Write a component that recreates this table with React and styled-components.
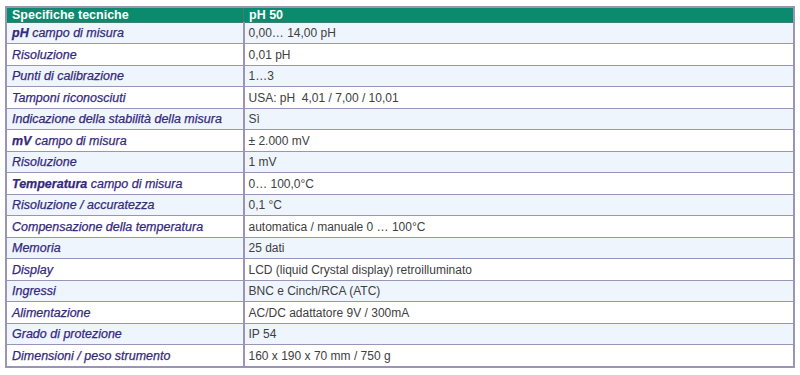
import styled, { createGlobalStyle } from 'styled-components';

const GlobalStyle = createGlobalStyle`
  html, body {
    margin: 0;
    padding: 0;
    background: #ffffff;
  }
`;

const Page = styled.div`
  padding: 6px 5px 0 5px;
  font-family: 'Liberation Sans', Arial, sans-serif;
`;

const Table = styled.table`
  width: 790px;
  height: 362px;
  border-collapse: collapse;
  table-layout: fixed;
  border: 2px solid #9a94b8;
  font-size: 12px;
`;

const HeadCell = styled.th`
  background: #0b8b6e;
  color: #ffffff;
  font-weight: bold;
  font-size: 12.5px;
  text-align: left;
  padding: 0 5px;
  border: 1px solid #3f7f6c;
  width: ${props => props.$width || 'auto'};
`;

const Row = styled.tr`
  background: ${props => (props.$alt ? '#eef5fd' : '#ffffff')};
`;

const LabelCell = styled.td`
  color: #35297a;
  font-style: italic;
  font-size: 12.5px;
  padding: 0 5px;
  border: 1px solid #9a94b8;
  white-space: nowrap;
  -webkit-text-stroke: 0.25px #35297a;

  strong {
    font-weight: bold;
  }
`;

const ValueCell = styled.td`
  color: #404040;
  padding: 0 4px;
  border: 1px solid #9a94b8;
  border-left: 2px solid #9a94b8;
  white-space: nowrap;
`;

const rows = [
  [<><strong>pH</strong> campo di misura</>, '0,00… 14,00 pH'],
  ['Risoluzione', '0,01 pH'],
  ['Punti di calibrazione', '1…3'],
  ['Tamponi riconosciuti', 'USA: pH\u00a0 4,01 / 7,00 / 10,01'],
  ['Indicazione della stabilità della misura', 'Sì'],
  [<><strong>mV</strong> campo di misura</>, '± 2.000 mV'],
  ['Risoluzione', '1 mV'],
  [<><strong>Temperatura</strong> campo di misura</>, '0… 100,0°C'],
  ['Risoluzione / accuratezza', '0,1 °C'],
  ['Compensazione della temperatura', 'automatica / manuale 0 … 100°C'],
  ['Memoria', '25 dati'],
  ['Display', 'LCD (liquid Crystal display) retroilluminato'],
  ['Ingressi', 'BNC e Cinch/RCA (ATC)'],
  ['Alimentazione', 'AC/DC adattatore 9V / 300mA'],
  ['Grado di protezione', 'IP 54'],
  ['Dimensioni / peso strumento', '160 x 190 x 70 mm / 750 g'],
];

const App = () => {
  return (
    <>
      <GlobalStyle />
      <Page>
        <Table>
          <thead>
            <tr>
              <HeadCell $width="226px">Specifiche tecniche</HeadCell>
              <HeadCell>pH 50</HeadCell>
            </tr>
          </thead>
          <tbody>
            {rows.map(([label, value], i) => (
              <Row key={i} $alt={i % 2 === 0}>
                <LabelCell>{label}</LabelCell>
                <ValueCell>{value}</ValueCell>
              </Row>
            ))}
          </tbody>
        </Table>
      </Page>
    </>
  );
};

export default App;
